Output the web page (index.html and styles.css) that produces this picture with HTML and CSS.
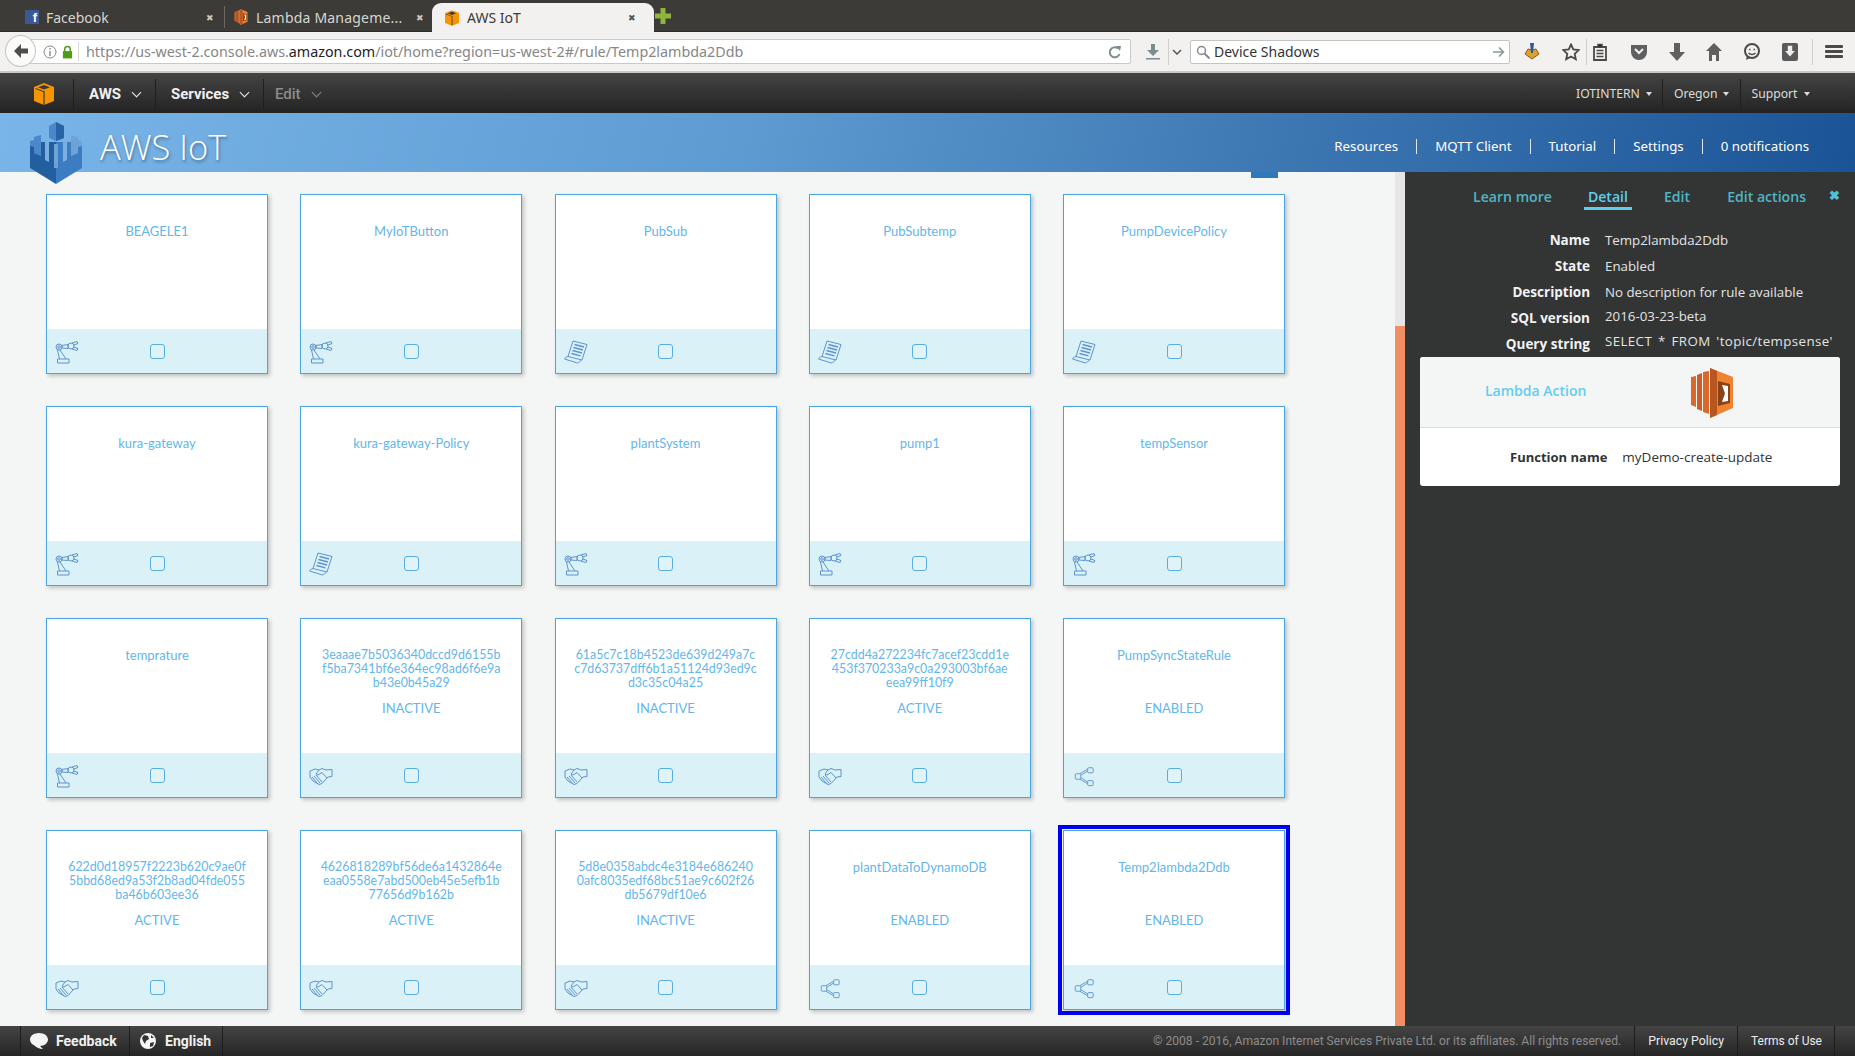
FILE: index.html
```html
<!DOCTYPE html>
<html lang="en">
<head>
  <meta charset="UTF-8" />
  <title>AWS IoT</title>
  <link rel="stylesheet" href="styles.css">
</head>
<body>
  <svg class="defs" width="0" height="0">
    <symbol id="i-thing" viewBox="0 0 24 24">
      <g fill="none" stroke="#5d93cf" stroke-width="1">
        <circle cx="4" cy="7" r="3"/><circle cx="4" cy="7" r="1.300"/>
        <path d="M7 5.500l6-1v4l-6-.5zM5 10l6 9M2.500 10l2 9"/>
        <circle cx="16" cy="6" r="3"/>
        <path d="M17 3l5-1.500 1 2-4 1.500M17 9l5 1.500 1-2-4-1.500"/>
        <path d="M2.500 19h11.500v4H2.500z"/>
      </g>
    </symbol>
    <symbol id="i-policy" viewBox="0 0 24 24">
      <g fill="none" stroke="#5d93cf" stroke-width="1">
        <path d="M9 1l14 3.500-5 15.500-14-3.500zM4 16.500c-2 .5-3.500 2-3.500 2.500l13 4c1-.5 3.500-2 4-3"/>
        <path d="M10.500 4.500l9.500 2.500M9.500 7.500l9.500 2.500M8.500 10.500l9.500 2.500M7.500 13.500l9 2.300" stroke-width="1.300"/>
      </g>
    </symbol>
    <symbol id="i-shake" viewBox="0 0 24 24">
      <g fill="none" stroke="#5d93cf" stroke-width="1">
        <path d="M1 7l5-2 4 1 3-1.500 4 1.500 6-.5v7l-4 .5-6 6.500-3 1-6-3.500-3-4z"/>
        <path d="M10 6l-3 4 2 1 4-2.500 5 5.500M3 13l6 7M5 12l6 7M7 11l6 7"/>
      </g>
    </symbol>
    <symbol id="i-rule" viewBox="0 0 24 24">
      <g fill="none" stroke="#5d93cf" stroke-width="1">
        <rect x="2.500" y="9.500" width="6" height="6" rx="1"/>
        <rect x="16" y="3" width="6" height="5.500" rx="1"/>
        <rect x="16" y="17" width="6" height="5.500" rx="1"/>
        <path d="M7.500 9.500l8.500-5M9 11l7-4.500M7.500 15.500l8.500 5M9 14l7 4.500"/>
      </g>
    </symbol>
    <symbol id="i-cube" viewBox="0 0 20 22">
      <path d="M10 0l10 4v14l-10 4-10-4V4z" fill="#f79400"/>
      <path d="M10 2L4 4.300l6 2.300 6-2.300zM9.400 8L1.500 5v1l7.900 3zM10.600 8v14h-1.200V8z" fill="#3b3a36"/>
    </symbol>
    <symbol id="i-lambda" viewBox="0 0 42 50">
      <path d="M0 9l5-1v31l-5-2z" fill="#d9692c"/>
      <path d="M6 7l5-2v38l-5-2z" fill="#c95f24"/>
      <path d="M12 4l6-1v43l-6-2z" fill="#d9692c"/>
      <path d="M19 0l23 9v31L19 50z" fill="#ef8331"/>
      <path d="M19 0v50l7-3V3z" fill="#b9551f"/>
      <path d="M27 13l12 3v19l-12 3z" fill="#8a4319"/>
      <path d="M31 17l6 1v15l-6 1 3-8.500z" fill="#fff"/>
    </symbol>
  </svg>

  <div class="tabstrip">
    <div class="tab">
      <span class="tab-fb">f</span>
      <span class="tab-title">Facebook</span>
      <span class="tab-x">✖</span>
    </div>
    <div class="tab tab-sep">
      <svg class="tab-icon" viewBox="0 0 42 50"><use href="#i-lambda"/></svg>
      <span class="tab-title">Lambda Manageme...</span>
      <span class="tab-x">✖</span>
    </div>
    <div class="tab tab-active">
      <svg class="tab-icon" viewBox="0 0 20 22"><use href="#i-cube"/></svg>
      <span class="tab-title">AWS IoT</span>
      <span class="tab-x">✖</span>
    </div>
    <svg class="tab-new" viewBox="0 0 16 16"><path d="M5.500 0h5v5.500H16v5h-5.500V16h-5v-5.500H0v-5h5.500z" fill="#8fb63a"/></svg>
  </div>

  <div class="toolbar">
    <div class="back">
      <svg viewBox="0 0 16 16" width="16" height="16"><path d="M8 1L1 8l7 7V10.500h7v-5H8z" fill="#4d4d4d"/></svg>
    </div>
    <div class="urlbar">
      <svg class="url-info" viewBox="0 0 14 14" width="14" height="14"><circle cx="7" cy="7" r="6" fill="none" stroke="#888"/><path d="M6.300 6h1.400v5H6.300zM6.300 3h1.400v1.500H6.300z" fill="#888"/></svg>
      <svg class="url-lock" viewBox="0 0 12 14" width="11" height="14"><path d="M1 6h10v8H1z" fill="#4f9c1c"/><path d="M3 6V4a3 3 0 0 1 6 0v2" fill="none" stroke="#4f9c1c" stroke-width="1.600"/></svg>
      <span class="url-text">https://us-west-2.console.aws.<b>amazon.com</b>/iot/home?region=us-west-2#/rule/Temp2lambda2Ddb</span>
      <svg class="url-reload" viewBox="0 0 14 14" width="14" height="14"><path d="M11.500 9A5 5 0 1 1 10 3.500" fill="none" stroke="#7f8c8d" stroke-width="2"/><path d="M8 1l5 0-1 5z" fill="#7f8c8d"/></svg>
    </div>
    <svg class="tool-dl" viewBox="0 0 14 16" width="14" height="16"><path d="M5 0h4v6h4l-6 6-6-6h4zM0 14h14v1.500H0z" fill="#7b8d8e"/></svg>
    <span class="tool-div tool-div-dl"></span>
    <svg class="tool-chev" viewBox="0 0 10 6" width="10" height="6"><path d="M1 1l4 4 4-4" fill="none" stroke="#555" stroke-width="1.500"/></svg>
    <div class="searchbar">
      <svg viewBox="0 0 14 14" width="14" height="14"><circle cx="5.500" cy="5.500" r="4" fill="none" stroke="#888" stroke-width="1.500"/><path d="M8.500 8.500l5 5" stroke="#888" stroke-width="2"/></svg>
      <span class="search-text">Device Shadows</span>
      <svg class="search-go" viewBox="0 0 12 12" width="12" height="12"><path d="M0 6h10M6 1.500L10.500 6 6 10.500" fill="none" stroke="#8a9699" stroke-width="1.600"/></svg>
    </div>
    <div class="tool-icons">
      <svg viewBox="0 0 18 20" width="18" height="20"><path d="M9 17L2 12l3-5 4 1 4-1 3 5z" fill="#e0a030" stroke="#8a5a10"/><path d="M7 1h4l-1 10H8z" fill="#2d5a9a"/></svg>
      <svg viewBox="0 0 18 18" width="18" height="18"><path d="M9 1.500l2.300 5 5.400.600-4 3.700 1.100 5.400L9 13.500l-4.800 2.700 1.100-5.400-4-3.700 5.400-.600z" fill="none" stroke="#4a4a4a" stroke-width="1.800"/></svg>
      <span class="tool-div tool-div-star"></span>
      <svg viewBox="0 0 14 18" width="14" height="18"><path d="M1 4h12v13H1z" fill="none" stroke="#4a4a4a" stroke-width="1.800"/><path d="M5 1.500h4V4H5zM3.500 7.500h7M3.500 10.500h7M3.500 13.500h7" stroke="#4a4a4a" stroke-width="1.500"/></svg>
      <svg class="tool-pocket" viewBox="0 0 18 18" width="18" height="18"><path d="M1 2h16v7a8 8 0 0 1-16 0z" fill="#5f5f5f"/><path d="M5 6l4 4 4-4" fill="none" stroke="#f2f1ef" stroke-width="2"/></svg>
      <svg viewBox="0 0 16 18" width="16" height="18"><path d="M5 0h6v9h5l-8 9-8-9h5z" fill="#5f5f5f"/></svg>
      <svg viewBox="0 0 16 18" width="16" height="18"><path d="M8 0l8 8h-3v10h-3v-6H6v6H3V8H0z" fill="#5f5f5f"/></svg>
      <svg viewBox="0 0 18 18" width="18" height="18"><circle cx="9" cy="8" r="7" fill="none" stroke="#4a4a4a" stroke-width="2"/><path d="M6 6.500h1.500M10.500 6.500H12M5.500 10c2 2 5 2 7 0" fill="none" stroke="#4a4a4a" stroke-width="1.500"/><path d="M4 13l-1 4 4-2z" fill="#4a4a4a"/></svg>
      <svg viewBox="0 0 18 20" width="16" height="18"><rect width="18" height="20" rx="2" fill="#5a5a5a"/><path d="M6.500 3h5v6h3L9 15 3.500 9h3z" fill="#eee"/></svg>
    </div>
    <div class="tool-menu">
      <span></span><span></span><span></span>
    </div>
  </div>

  <nav class="awsnav">
    <div class="awsnav-logo"><svg viewBox="0 0 20 22" width="20" height="22"><use href="#i-cube"/></svg></div>
    <div class="awsnav-item">AWS <i class="chev"></i></div>
    <div class="awsnav-item">Services <i class="chev"></i></div>
    <div class="awsnav-item awsnav-dim">Edit <i class="chev"></i></div>
    <div class="awsnav-right">
      <div class="awsnav-sm">IOTINTERN <i class="caret"></i></div>
      <div class="awsnav-sm">Oregon <i class="caret"></i></div>
      <div class="awsnav-sm">Support <i class="caret"></i></div>
    </div>
  </nav>

  <header class="iothead">
    <svg class="iothead-logo" viewBox="0 0 52 62" width="52" height="62">
      <path d="M0 20v26l26 16V20z" fill="#235f9f"/>
      <path d="M52 20v26L26 62V20z" fill="#3c7dc1"/>
      <path d="M0 19l4-1v-3l7-2v21l-7-3v-6l-4-1z" fill="#4a88c9"/>
      <path d="M52 19l-4-1v-3l-7-2v21l7-3v-6l4-1z" fill="#6ea3d8"/>
      <path d="M19 4l7-4 8 4v12l-8 3-7-3z" fill="#4a88c9"/>
      <path d="M26 0l8 4v12l-8 3z" fill="#2a63a5"/>
      <path d="M15 19h4v21l-4-2zM37 19h-4v21l4-2z" fill="#7db0e0"/>
      <path d="M24 22h4v24h-4z" fill="#6ea3d8"/>
    </svg>
    <span class="iothead-title">AWS IoT</span>
    <div class="iothead-links">
      <a>Resources</a><a>MQTT Client</a><a>Tutorial</a><a>Settings</a><a>0 notifications</a>
    </div>
  </header>

  <div class="main">
    <section class="content">
      <span class="content-tab"></span>
      <div class="grid">
        <div class="card"><div class="card-body"><p class="card-name">BEAGELE1</p></div><div class="card-foot"><svg class="card-icon"><use href="#i-thing"/></svg><i class="check"></i></div></div>
        <div class="card"><div class="card-body"><p class="card-name">MyIoTButton</p></div><div class="card-foot"><svg class="card-icon"><use href="#i-thing"/></svg><i class="check"></i></div></div>
        <div class="card"><div class="card-body"><p class="card-name">PubSub</p></div><div class="card-foot"><svg class="card-icon"><use href="#i-policy"/></svg><i class="check"></i></div></div>
        <div class="card"><div class="card-body"><p class="card-name">PubSubtemp</p></div><div class="card-foot"><svg class="card-icon"><use href="#i-policy"/></svg><i class="check"></i></div></div>
        <div class="card"><div class="card-body"><p class="card-name">PumpDevicePolicy</p></div><div class="card-foot"><svg class="card-icon"><use href="#i-policy"/></svg><i class="check"></i></div></div>

        <div class="card"><div class="card-body"><p class="card-name">kura-gateway</p></div><div class="card-foot"><svg class="card-icon"><use href="#i-thing"/></svg><i class="check"></i></div></div>
        <div class="card"><div class="card-body"><p class="card-name">kura-gateway-Policy</p></div><div class="card-foot"><svg class="card-icon"><use href="#i-policy"/></svg><i class="check"></i></div></div>
        <div class="card"><div class="card-body"><p class="card-name">plantSystem</p></div><div class="card-foot"><svg class="card-icon"><use href="#i-thing"/></svg><i class="check"></i></div></div>
        <div class="card"><div class="card-body"><p class="card-name">pump1</p></div><div class="card-foot"><svg class="card-icon"><use href="#i-thing"/></svg><i class="check"></i></div></div>
        <div class="card"><div class="card-body"><p class="card-name">tempSensor</p></div><div class="card-foot"><svg class="card-icon"><use href="#i-thing"/></svg><i class="check"></i></div></div>

        <div class="card"><div class="card-body"><p class="card-name">temprature</p></div><div class="card-foot"><svg class="card-icon"><use href="#i-thing"/></svg><i class="check"></i></div></div>
        <div class="card"><div class="card-body"><p class="card-name card-hash">3eaaae7b5036340dccd9d6155b<br>f5ba7341bf6e364ec98ad6f6e9a<br>b43e0b45a29</p><p class="card-state">INACTIVE</p></div><div class="card-foot"><svg class="card-icon"><use href="#i-shake"/></svg><i class="check"></i></div></div>
        <div class="card"><div class="card-body"><p class="card-name card-hash">61a5c7c18b4523de639d249a7c<br>c7d63737dff6b1a51124d93ed9c<br>d3c35c04a25</p><p class="card-state">INACTIVE</p></div><div class="card-foot"><svg class="card-icon"><use href="#i-shake"/></svg><i class="check"></i></div></div>
        <div class="card"><div class="card-body"><p class="card-name card-hash">27cdd4a272234fc7acef23cdd1e<br>453f370233a9c0a293003bf6ae<br>eea99ff10f9</p><p class="card-state">ACTIVE</p></div><div class="card-foot"><svg class="card-icon"><use href="#i-shake"/></svg><i class="check"></i></div></div>
        <div class="card"><div class="card-body"><p class="card-name">PumpSyncStateRule</p><p class="card-state">ENABLED</p></div><div class="card-foot"><svg class="card-icon card-icon-rule"><use href="#i-rule"/></svg><i class="check"></i></div></div>

        <div class="card"><div class="card-body"><p class="card-name card-hash">622d0d18957f2223b620c9ae0f<br>5bbd68ed9a53f2b8ad04fde055<br>ba46b603ee36</p><p class="card-state">ACTIVE</p></div><div class="card-foot"><svg class="card-icon"><use href="#i-shake"/></svg><i class="check"></i></div></div>
        <div class="card"><div class="card-body"><p class="card-name card-hash">4626818289bf56de6a1432864e<br>eaa0558e7abd500eb45e5efb1b<br>77656d9b162b</p><p class="card-state">ACTIVE</p></div><div class="card-foot"><svg class="card-icon"><use href="#i-shake"/></svg><i class="check"></i></div></div>
        <div class="card"><div class="card-body"><p class="card-name card-hash">5d8e0358abdc4e3184e686240<br>0afc8035edf68bc51ae9c602f26<br>db5679df10e6</p><p class="card-state">INACTIVE</p></div><div class="card-foot"><svg class="card-icon"><use href="#i-shake"/></svg><i class="check"></i></div></div>
        <div class="card"><div class="card-body"><p class="card-name">plantDataToDynamoDB</p><p class="card-state">ENABLED</p></div><div class="card-foot"><svg class="card-icon card-icon-rule"><use href="#i-rule"/></svg><i class="check"></i></div></div>
        <div class="card card-selected"><div class="card-body"><p class="card-name">Temp2lambda2Ddb</p><p class="card-state">ENABLED</p></div><div class="card-foot"><svg class="card-icon card-icon-rule"><use href="#i-rule"/></svg><i class="check"></i></div></div>
      </div>
    </section>

    <div class="scrollbar"><div class="scrollbar-thumb"></div></div>

    <aside class="panel">
      <div class="panel-tabs">
        <a>Learn more</a>
        <a class="is-active">Detail</a>
        <a>Edit</a>
        <a class="panel-tab-last">Edit actions</a>
        <span class="panel-close">✖</span>
      </div>
      <dl class="details">
        <dt>Name</dt><dd>Temp2lambda2Ddb</dd>
        <dt>State</dt><dd>Enabled</dd>
        <dt>Description</dt><dd>No description for rule available</dd>
        <dt>SQL version</dt><dd class="up">2016-03-23-beta</dd>
        <dt>Query string</dt><dd class="up query">SELECT * FROM 'topic/tempsense'</dd>
      </dl>
      <div class="action">
        <div class="action-head">
          <span class="action-title">Lambda Action</span>
          <svg class="action-icon" viewBox="0 0 42 50" width="42" height="50"><use href="#i-lambda"/></svg>
        </div>
        <div class="action-body">
          <span class="action-label">Function name</span>
          <span>myDemo-create-update</span>
        </div>
      </div>
    </aside>
  </div>

  <footer class="foot">
    <div class="foot-item foot-feedback">
      <svg viewBox="0 0 18 16" width="18" height="16"><path d="M9 0c5 0 9 2.800 9 6.500S14 13 10 13l3 3c-4 0-7-2-8.500-3.500C2 11.500 0 9.500 0 6.500 0 2.800 4 0 9 0z" fill="#f4f4f4"/></svg>
      Feedback
    </div>
    <div class="foot-item foot-lang">
      <svg viewBox="0 0 16 16" width="16" height="16"><circle cx="8" cy="8" r="8" fill="#f4f4f4"/><path d="M4 2l4 1 1 3-3 2-1 3-2-3-1-3zM10 10l4-1-1 4-3 1zM11 2l3 3-3 0z" fill="#333"/></svg>
      English
    </div>
    <span class="foot-copy">© 2008 - 2016, Amazon Internet Services Private Ltd. or its affiliates. All rights reserved.</span>
    <a class="foot-link">Privacy Policy</a>
    <a class="foot-link foot-link-last">Terms of Use</a>
  </footer>
</body>
</html>
```

FILE: styles.css
```css
*, *::before, *::after {
  box-sizing: border-box;
}

html, body {
  height: 100%;
}

body {
  margin: 0;
  width: 1855px;
  height: 1056px;
  overflow: hidden;
  display: flex;
  flex-direction: column;
  font-family: Lato, sans-serif;
  background: #f4f6f6;
}

.defs {
  position: absolute;
}

/* browser chrome */
.tabstrip {
  height: 32px;
  flex: none;
  display: flex;
  align-items: flex-end;
  background: #3c3b37;
  padding-left: 25px;
  font-family: "Noto Sans", sans-serif;
  font-size: 14px;
  color: #d8d6d0;
  border-bottom: 1px solid #2a2a28;
}

.tab {
  height: 28px;
  display: flex;
  align-items: center;
}

.tab:nth-child(1) {
  width: 199px;
}

.tab-sep {
  width: 203px;
  padding-left: 9px;
  position: relative;
  border-left: 1px solid #6b6a65;
  height: 22px;
  margin-bottom: 3px;
}

.tab-sep .tab-title {
  letter-spacing: .2px;
}

.tab-sep .tab-x {
  margin-right: 3px;
}

.tab-fb {
  width: 14px;
  height: 14px;
  margin-right: 7px;
  background: #3b5998;
  color: #fff;
  font: bold 13px/15px "Liberation Sans", sans-serif;
  text-align: right;
  padding-right: 2px;
}

.tab-icon {
  width: 14px;
  height: 16px;
  margin-right: 8px;
}

.tab-title {
  flex: 1;
  white-space: nowrap;
}

.tab-x {
  font-size: 9px;
  color: #c9c7c2;
  margin-right: 10px;
}

.tab-active {
  width: 222px;
  margin-left: 5px;
  padding: 0 8px 0 13px;
  background: #f2f1ef;
  color: #3c3b37;
  border-radius: 9px 9px 0 0;
  margin-bottom: -1px;
  height: 29px;
}

.tab-active .tab-x {
  color: #555;
}

.tab-new {
  width: 16px;
  height: 16px;
  margin: 0 0 7px 1px;
}

.toolbar {
  height: 41px;
  flex: none;
  display: flex;
  align-items: center;
  position: relative;
  background: #f2f1ef;
  border-bottom: 2px solid #c9c8c5;
  padding-left: 17px;
}

.back {
  position: absolute;
  left: 5px;
  top: 3px;
  width: 31px;
  height: 32px;
  border-radius: 50%;
  background: #fbfbfa;
  border: 1px solid #c4c4c2;
  display: flex;
  align-items: center;
  justify-content: center;
  z-index: 1;
}

.urlbar {
  width: 1114px;
  height: 25px;
  display: flex;
  align-items: center;
  background: #fff;
  border: 1px solid #c9c9c7;
  border-radius: 2px;
  padding-left: 25px;
  font-family: "Noto Sans", sans-serif;
  font-size: 14.300px;
  color: #858686;
}

.url-lock {
  margin-left: 5px;
}

.url-text {
  margin-left: 5px;
  padding-left: 7px;
  border-left: 1px solid #d8d8d8;
  white-space: nowrap;
}

.url-text b {
  font-weight: 400;
  color: #222;
}

.url-reload {
  margin-left: auto;
  margin-right: 8px;
}

.tool-dl {
  margin-left: 15px;
}

.tool-div {
  width: 1px;
  height: 26px;
  flex: none;
  background: #cfcecb;
}

.tool-div-dl {
  margin-left: 8px;
}

.tool-chev {
  margin-left: 3px;
}

.searchbar {
  width: 320px;
  height: 24px;
  margin-left: 8px;
  display: flex;
  align-items: center;
  gap: 4px;
  padding: 0 4px 0 5px;
  background: #fff;
  border: 1px solid #c4c4c2;
  border-radius: 2px;
  font-family: "Noto Sans", sans-serif;
  font-size: 14px;
  color: #333;
}

.search-go {
  margin-left: auto;
}

.tool-icons {
  margin-left: 13px;
  display: flex;
  align-items: center;
  gap: 21px;
}

.tool-div-star {
  margin: 0 -15px 0 -15px;
}

.tool-pocket {
  margin-left: 2px;
}

.tool-menu {
  margin-left: 14px;
  padding-left: 12px;
  width: 31px;
  height: 26px;
  border-left: 1px solid #cfcecb;
  display: flex;
  flex-direction: column;
  justify-content: center;
  gap: 2px;
}

.tool-menu span {
  height: 3px;
  background: #4a4a4a;
  border-radius: 1px;
}

/* aws bar */
.awsnav {
  height: 40px;
  flex: none;
  display: flex;
  align-items: center;
  padding-top: 1px;
  background: linear-gradient(#444, #232323);
  font-family: Roboto, sans-serif;
  color: #f0f0f0;
}

.awsnav-logo {
  width: 73px;
  padding-left: 34px;
  display: flex;
}

.awsnav-item {
  height: 30px;
  display: flex;
  align-items: center;
  gap: 12px;
  padding: 0 11px 0 15px;
  border-left: 1px solid #1f1f1f;
  font-size: 15px;
  font-weight: 700;
}

.awsnav-item:nth-child(2) {
  width: 82px;
}

.awsnav-item:nth-child(3) {
  width: 108px;
}

.awsnav-dim {
  color: #8b8b8b;
  font-weight: 500;
  padding-left: 11px;
}

.chev {
  width: 7px;
  height: 7px;
  margin-top: -3px;
  border-right: 1.500px solid currentColor;
  border-bottom: 1.500px solid currentColor;
  transform: rotate(45deg);
}

.awsnav-right {
  margin-left: auto;
  margin-right: 35px;
  display: flex;
}

.awsnav-sm {
  height: 30px;
  display: flex;
  align-items: center;
  gap: 6px;
  padding: 0 10.500px;
  border-left: 1px solid #1f1f1f;
  font-family: "Noto Sans", sans-serif;
  font-size: 12.200px;
  color: #dcdcdc;
}

.awsnav-sm:first-child {
  border-left: 0;
}

.caret {
  border: 3.500px solid transparent;
  border-top: 4px solid currentColor;
  border-bottom: 0;
}

/* service header */
.iothead {
  height: 59px;
  flex: none;
  position: relative;
  z-index: 2;
  display: flex;
  align-items: center;
  padding: 8px 0 0 100px;
  background: linear-gradient(105deg, #79b5e8 0%, #5e9bd1 40%, #3a74b0 72%, #1b5496 100%);
  color: #fff;
}

.iothead-logo {
  position: absolute;
  left: 30px;
  top: 9px;
}

.iothead-title {
  font-family: "Open Sans", sans-serif;
  font-size: 34.500px;
  font-weight: 300;
  text-shadow: 1px 2px 3px rgba(0, 0, 0, .35);
}

.iothead-links {
  margin-left: auto;
  margin-right: 46px;
  display: flex;
  font-family: "Noto Sans", sans-serif;
  font-size: 13.300px;
}

.iothead-links a {
  padding: 0 18px;
  line-height: 15px;
  border-left: 1px solid #dfe9f3;
}

.iothead-links a:first-child {
  border-left: 0;
}

.iothead-links a:last-child {
  padding-right: 0;
}

/* cards */
.main {
  flex: 1;
  min-height: 0;
  display: flex;
}

.content {
  flex: 1;
  position: relative;
  padding: 22px 0 0 46px;
  overflow: hidden;
}

.content-tab {
  position: absolute;
  left: 1251px;
  top: 0;
  width: 27px;
  height: 6px;
  background: #2f78b9;
}

.grid {
  display: grid;
  grid-template-columns: repeat(5, 222px);
  grid-auto-rows: 180px;
  column-gap: 32.250px;
  row-gap: 32px;
}

.card {
  display: flex;
  flex-direction: column;
  background: #fff;
  border: 1px solid #4aa6e0;
  box-shadow: 2px 2px 4px rgba(0, 0, 0, .22);
  color: #63b6ea;
  font-size: 13px;
  text-align: center;
}

.card-selected {
  outline: 4px solid #0000f0;
  outline-offset: 1px;
}

.card-body {
  flex: 1;
  padding-top: 29px;
}

.card-name {
  margin: 0;
  min-height: 42px;
  line-height: 14px;
  white-space: nowrap;
}

.card-hash {
  font-size: 12.400px;
}

.card-state {
  margin: 11px 0 0;
  line-height: 14px;
}

.card-foot {
  height: 44px;
  flex: none;
  position: relative;
  display: flex;
  align-items: center;
  justify-content: center;
  background: #d9f1f7;
}

.card-icon {
  position: absolute;
  left: 8px;
  top: 11px;
  width: 24px;
  height: 24px;
}

.card-icon-rule {
  left: 9px;
  top: 12px;
  width: 22px;
  height: 22px;
}

.check {
  width: 15px;
  height: 15px;
  background: #dff3f8;
  border: 1.500px solid #58ade5;
  border-radius: 3px;
}

/* scrollbar and side panel */
.scrollbar {
  width: 10px;
  flex: none;
  background: #e6e6e6;
  padding-top: 154px;
  display: flex;
}

.scrollbar-thumb {
  flex: 1;
  background: #f28e63;
}

.panel {
  width: 450px;
  flex: none;
  padding: 0 15px;
  background: #333534;
  font-family: "Open Sans", sans-serif;
  font-size: 13.300px;
  color: #e4e4e4;
}

.panel-tabs {
  height: 41px;
  margin-top: 14px;
  display: flex;
  align-items: flex-start;
  font-size: 14.100px;
  font-weight: 600;
  color: #4fb5c4;
  padding-left: 49px;
  white-space: nowrap;
}

.panel-tabs a {
  flex: none;
  padding: 1px 4px 0;
  height: 24px;
  margin-right: 28px;
  line-height: 20px;
}

.panel-tabs a:nth-child(3) {
  margin-right: 29px;
}

.panel-tabs a.panel-tab-last {
  margin-right: 0;
}

.panel-tabs a.is-active {
  color: #5dcfee;
  border-bottom: 3px solid #5dcfee;
}

.panel-close {
  margin: 0 0 0 auto;
  font-size: 13px;
  color: #4fc3d4;
}

.details {
  margin: 0;
  display: grid;
  grid-template-columns: 170px 1fr;
  column-gap: 15px;
  grid-auto-rows: 26px;
  line-height: 26px;
}

.details dt {
  font-size: 13.500px;
  font-weight: 700;
  text-align: right;
  color: #f2f2f2;
}

.details dd {
  margin: 0;
}

.details dd.up {
  margin-top: -2px;
}

.details dd.query {
  margin-top: -3px;
  word-spacing: 2px;
  letter-spacing: .4px;
}

.action {
  border-radius: 3px;
  overflow: hidden;
  background: #fff;
  color: #333;
}

.action-head {
  height: 71px;
  position: relative;
  background: #f4f6f6;
  border-bottom: 1px solid #dcdcdc;
  padding: 24px 0 0 65px;
}

.action-title {
  font-size: 14px;
  font-weight: 600;
  color: #62cdf0;
}

.action-icon {
  position: absolute;
  left: 271px;
  top: 11px;
}

.action-body {
  height: 58px;
  display: flex;
  align-items: center;
  justify-content: flex-start;
  gap: 15px;
  padding-left: 90px;
  padding-bottom: 1px;
  font-size: 13.500px;
}

.action-label {
  font-size: 13px;
  font-weight: 700;
}

/* footer */
.foot {
  height: 30px;
  flex: none;
  display: flex;
  align-items: center;
  background: linear-gradient(#444, #262626);
  font-family: Roboto, sans-serif;
}

.foot-item {
  height: 100%;
  display: flex;
  align-items: center;
  border-left: 1px solid #1d1d1d;
  font-size: 14px;
  font-weight: 700;
  color: #f0f0f0;
}

.foot-feedback {
  margin-left: 20px;
  width: 109px;
  padding-left: 9px;
  gap: 8px;
}

.foot-lang {
  width: 94px;
  padding-left: 10px;
  gap: 9px;
  border-right: 1px solid #1d1d1d;
}

.foot-copy {
  margin-left: auto;
  padding-right: 13px;
  font-size: 12.100px;
  color: #8c8c8c;
}

.foot-link {
  height: 100%;
  display: flex;
  align-items: center;
  padding: 0 13px;
  border-left: 1px solid #1d1d1d;
  font-size: 12.300px;
  color: #ececec;
}

.foot-link-last {
  margin-right: 20px;
  border-right: 1px solid #1d1d1d;
  padding-right: 12px;
  font-size: 12px;
}
```
